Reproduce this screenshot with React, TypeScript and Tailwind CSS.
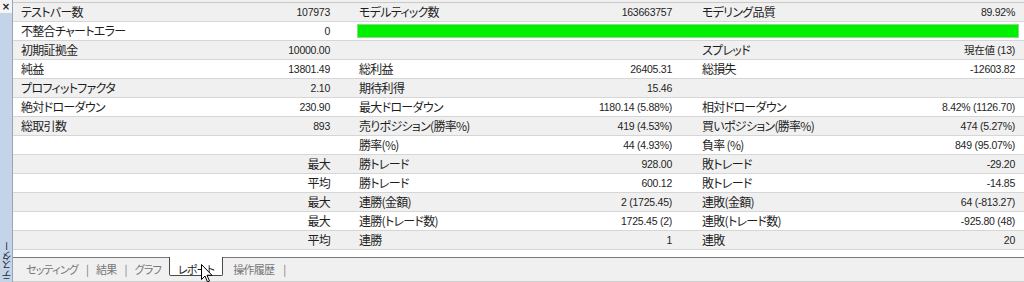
import React from "react";

type Cell = [string, string] | null;
type Row = { cells: Cell[]; bar?: boolean };

const rows: Row[] = [
  { cells: [["テストバー数", "107973"], ["モデルティック数", "163663757"], ["モデリング品質", "89.92%"]] },
  { cells: [["不整合チャートエラー", "0"]], bar: true },
  { cells: [["初期証拠金", "10000.00"], null, ["スプレッド", "現在値 (13)"]] },
  { cells: [["純益", "13801.49"], ["総利益", "26405.31"], ["総損失", "-12603.82"]] },
  { cells: [["プロフィットファクタ", "2.10"], ["期待利得", "15.46"], null] },
  { cells: [["絶対ドローダウン", "230.90"], ["最大ドローダウン", "1180.14 (5.88%)"], ["相対ドローダウン", "8.42% (1126.70)"]] },
  { cells: [["総取引数", "893"], ["売りポジション(勝率%)", "419 (4.53%)"], ["買いポジション(勝率%)", "474 (5.27%)"]] },
  { cells: [null, ["勝率(%)", "44 (4.93%)"], ["負率 (%)", "849 (95.07%)"]] },
  { cells: [["", "最大"], ["勝トレード", "928.00"], ["敗トレード", "-29.20"]] },
  { cells: [["", "平均"], ["勝トレード", "600.12"], ["敗トレード", "-14.85"]] },
  { cells: [["", "最大"], ["連勝(金額)", "2 (1725.45)"], ["連敗(金額)", "64 (-813.27)"]] },
  { cells: [["", "最大"], ["連勝(トレード数)", "1725.45 (2)"], ["連敗(トレード数)", "-925.80 (48)"]] },
  { cells: [["", "平均"], ["連勝", "1"], ["連敗", "20"]] },
];

const padR = ["pr-[21px]", "pr-[22px]", "pr-[9px]"];

const jpText =
  "text-[12px] tracking-[-0.7px] [font-family:'Noto_Sans_CJK_JP',sans-serif] [font-feature-settings:'palt'] whitespace-nowrap leading-none";
const numText =
  "text-[10.5px] [font-family:'Liberation_Sans','Noto_Sans_CJK_JP',sans-serif] tracking-[-0.25px] whitespace-nowrap leading-none";

function CellView({ cell, idx }: { cell: Cell; idx: number }) {
  const value = cell ? cell[1] : "";
  const isJp = value !== "" && !/[0-9]/.test(value);
  return (
    <div className={`flex items-center justify-between pl-[8px] ${padR[idx]} min-w-0`}>
      <span className={jpText}>{cell ? cell[0] : ""}</span>
      <span className={isJp ? jpText : numText}>{value}</span>
    </div>
  );
}

const tabText = "mt-[5px] leading-[13px] whitespace-nowrap";

export default function App() {
  return (
    <div className="relative w-[1024px] h-[282px] overflow-hidden flex bg-white text-[#1e1e1e]">
      {/* sidebar */}
      <div className="w-[13px] h-full flex flex-col border-r border-[#9aa6b4] shrink-0">
        <div className="h-[13px] bg-[#f4f4f4] flex items-center justify-center text-[10px] font-bold leading-none [font-family:'DejaVu_Sans',sans-serif] text-[#222]">
          ×
        </div>
        <div className="flex-1 bg-[#c3d3e8] flex flex-col justify-end items-center pb-[2px]">
          <span className="[writing-mode:vertical-rl] rotate-180 text-[10px] leading-[11px] tracking-[-0.3px] [font-family:'Noto_Sans_CJK_JP',sans-serif] [font-feature-settings:'palt'] text-[#1e2a3a] whitespace-nowrap">
            テスター
          </span>
        </div>
      </div>

      {/* main */}
      <div className="flex-1 flex flex-col min-w-0">
        <div className="h-[3px] bg-[#f0f0f0] border-b border-[#c8c8c8] box-border" />
        {rows.map((r, i) => (
          <div
            key={i}
            className={`grid grid-cols-[338px_343px_1fr] h-[19px] box-border border-b border-[#d6d6d6] ${
              i % 2 === 0 ? "bg-[#f0f0f0]" : "bg-white"
            }`}
          >
            {r.bar ? (
              <>
                <CellView cell={r.cells[0]} idx={0} />
                <div className="col-span-2 flex items-center pl-[6px] pr-[5px]">
                  <div className="w-full h-[14px] bg-[#00f000] border border-[#8ed88e]" />
                </div>
              </>
            ) : (
              r.cells.map((c, j) => <CellView key={j} cell={c} idx={j} />)
            )}
          </div>
        ))}
        <div className="flex-1 bg-white" />
        {/* tab bar */}
        <div className="h-[25px] box-border border-t border-[#7a7a7a] border-b border-b-[#cfcfcf] bg-[#f0f0f0] flex items-start pl-[13px] text-[11px] tracking-[-0.8px] [font-family:'Noto_Sans_CJK_JP',sans-serif] [font-feature-settings:'palt'] text-[#777]">
          <span className={tabText}>セッティング</span>
          <span className={`${tabText} px-[8px]`}>|</span>
          <span className={tabText}>結果</span>
          <span className={`${tabText} px-[8px]`}>|</span>
          <span className={tabText}>グラフ</span>
          <span className="ml-[8px] -mt-px h-[19px] px-[8px] bg-white border-l border-r border-b border-[#4a4a4a] rounded-b-[2px] text-[#1e1e1e] flex items-start">
            <span className="mt-[6px] leading-[13px] whitespace-nowrap">レポート</span>
          </span>
          <span className={`${tabText} ml-[10px]`}>操作履歴</span>
          <span className={`${tabText} px-[9px]`}>|</span>
        </div>
      </div>

      {/* mouse cursor */}
      <svg className="absolute left-[201px] top-[264px]" width="12" height="19" viewBox="0 0 12 19">
        <path d="M0.5 0.5 L0.5 15.5 L4 12 L6.5 18 L8.5 17 L6 11.3 L11 11.3 Z" fill="white" stroke="black" strokeWidth="1" strokeLinejoin="miter" />
      </svg>
    </div>
  );
}
